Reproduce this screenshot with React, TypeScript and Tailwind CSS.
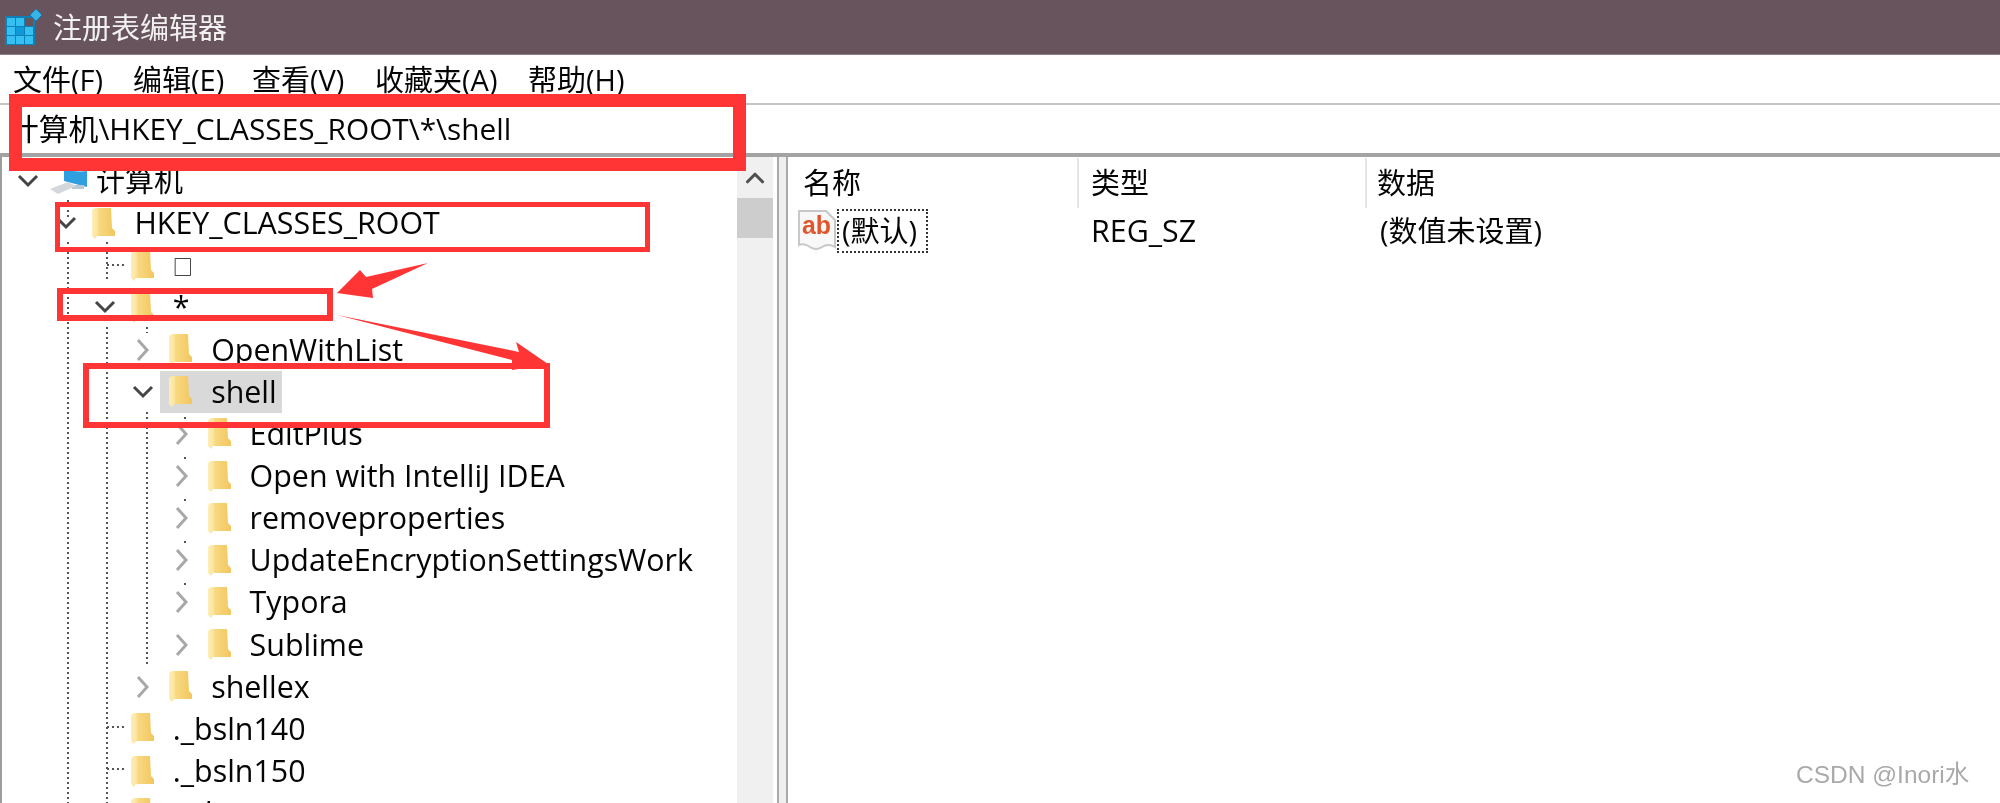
import { ChevronUp } from 'lucide-react';

const cjk = "font-['Open_Sans','Noto_Sans_CJK_SC',sans-serif]";

type Row = {
  label: string;
  level: number;
  state?: 'open' | 'closed';
  selected?: boolean;
};

const rows: Row[] = [
  { label: 'HKEY_CLASSES_ROOT', level: 1, state: 'open' },
  { label: '□', level: 2 },
  { label: '*', level: 2, state: 'open' },
  { label: 'OpenWithList', level: 3, state: 'closed' },
  { label: 'shell', level: 3, state: 'open', selected: true },
  { label: 'EditPlus', level: 4, state: 'closed' },
  { label: 'Open with IntelliJ IDEA', level: 4, state: 'closed' },
  { label: 'removeproperties', level: 4, state: 'closed' },
  { label: 'UpdateEncryptionSettingsWork', level: 4, state: 'closed' },
  { label: 'Typora', level: 4, state: 'closed' },
  { label: 'Sublime', level: 4, state: 'closed' },
  { label: 'shellex', level: 3, state: 'closed' },
  { label: '._bsln140', level: 2 },
  { label: '._bsln150', level: 2 },
  { label: '._dsn', level: 2 },
];

function Folder() {
  return (
    <svg width="23" height="31" viewBox="0 0 23 31" className="shrink-0">
      <defs>
        <linearGradient id="fold" x1="0" y1="0" x2="1" y2="0">
          <stop offset="0" stopColor="#fdeeb8" />
          <stop offset="0.22" stopColor="#fbe6a0" />
          <stop offset="0.3" stopColor="#f8d981" />
          <stop offset="1" stopColor="#f2c65f" />
        </linearGradient>
      </defs>
      <path d="M0 2 L3 0 L19 0 L20 20 L23 23 L23 28 L5 28 L3 31 L0 28 Z" fill="url(#fold)" />
    </svg>
  );
}

function Chevron({ state }: { state?: 'open' | 'closed' }) {
  if (state === 'open') {
    return (
      <svg width="24" height="16" viewBox="0 0 24 16">
        <path d="M3 3 L12 12 L21 3" fill="none" stroke="#454545" strokeWidth="3" />
      </svg>
    );
  }
  if (state === 'closed') {
    return (
      <svg width="16" height="26" viewBox="0 0 16 26">
        <path d="M3 3 L12 13 L3 23" fill="none" stroke="#a8a8a8" strokeWidth="3" />
      </svg>
    );
  }
  return null;
}

function TreeRow({ row }: { row: Row }) {
  const chevronCenter = 28 + row.level * 38.4;
  return (
    <div className="h-[42.15px] flex items-center relative" style={{ paddingLeft: chevronCenter - 14 }}>
      <span className="w-[28px] shrink-0 flex justify-center">
        <Chevron state={row.state} />
      </span>
      <span className="ml-[12px]">
        <Folder />
      </span>
      <span
        className={`ml-[19px] leading-[42px] text-[#050505] whitespace-nowrap ${
          row.label === '□' ? 'text-[20px] pt-[5px]' : 'text-[30.4px]'
        } ${cjk}`}
      >
        {row.label}
      </span>
      {row.selected && (
        <span className="absolute left-[160px] top-0 w-[122px] h-[42px] bg-[#d9d9d9] -z-10" />
      )}
    </div>
  );
}

function RegeditIcon() {
  return (
    <svg width="38" height="36" viewBox="0 0 38 36">
      <rect x="0" y="7" width="30" height="29" fill="#0f7fb8" />
      {[0, 1, 2].map((r) =>
        [0, 1, 2].map((c) => (
          <rect
            key={`${r}-${c}`}
            x={2 + c * 9}
            y={9 + r * 9}
            width="8"
            height="8"
            fill={r === 0 && c === 2 ? '#67545c' : r === 1 && c === 1 ? '#1098d8' : '#35c0f2'}
          />
        ))
      )}
      <path d="M31 0 L37 6 L31 12 L25 6 Z" fill="#35b4e8" stroke="#0f7fb8" />
    </svg>
  );
}

function ComputerIcon() {
  return (
    <svg width="38" height="28" viewBox="0 0 38 28" className="shrink-0">
      <path d="M14 1 L37 4 L37 20 L14 14 Z" fill="#2f9fe0" />
      <path d="M14 1 L37 4 L30 5 L14 3 Z" fill="#8fd3f7" />
      <rect x="22" y="18" width="12" height="4" fill="#b8c8d4" />
      <path d="M0 22 L18 15 L26 19 L8 27 Z" fill="#d4d8dc" />
    </svg>
  );
}

function AbIcon() {
  return (
    <svg width="38" height="44" viewBox="0 0 38 44" className="shrink-0">
      <path
        d="M1 2 L28 2 L37 11 L37 38 Q30 34 24 38 Q18 42 12 38 Q6 34 1 36 Z"
        fill="#f8f8f8"
        stroke="#c8c8c8"
        strokeWidth="2"
      />
      <text
        x="4"
        y="25"
        fontFamily="'Liberation Sans', sans-serif"
        fontWeight="700"
        fontSize="25"
        textLength="29"
        lengthAdjust="spacingAndGlyphs"
        fill="#e0552c"
      >
        ab
      </text>
    </svg>
  );
}

export default function App() {
  return (
    <div className={`h-screen w-full overflow-hidden flex flex-col bg-white relative blur-[0.6px] ${cjk}`}>
      {/* Title bar */}
      <div className="h-[55px] shrink-0 bg-[#67545c] border-b border-[#8d8186] flex items-center pl-[5px]">
        <RegeditIcon />
        <span className="ml-[10px] text-[29px] leading-none text-[#f2f0f0]">注册表编辑器</span>
      </div>

      {/* Menu */}
      <div className="h-[50px] shrink-0 flex items-center pl-[13px] pt-[1px] text-[29px] text-[#050505] border-b-2 border-[#c4c4c4]">
        <span className="w-[120px]">文件(F)</span>
        <span className="w-[119px]">编辑(E)</span>
        <span className="w-[123px]">查看(V)</span>
        <span className="w-[153px]">收藏夹(A)</span>
        <span>帮助(H)</span>
      </div>

      {/* Address bar */}
      <div className="h-[52px] shrink-0 flex items-center pl-[9px] pt-[1px] text-[29.8px] text-[#050505] border-b-4 border-[#a3a3a3] whitespace-nowrap">
        计算机\HKEY_CLASSES_ROOT\*\shell
      </div>

      <div className="flex-1 min-h-0 flex">
        {/* Tree */}
        <div className="w-[737px] shrink-0 border-l-2 border-[#9d9d9d] relative overflow-hidden z-0">
          <div className="pt-[3px] -ml-[2px]">
            <div className="h-[42.15px] flex items-center pl-[14px]">
              <span className="w-[28px] shrink-0 flex justify-center">
                <Chevron state="open" />
              </span>
              <span className="ml-[8px]">
                <ComputerIcon />
              </span>
              <span className="ml-[8px] text-[29px] text-[#050505]">计算机</span>
            </div>
            {rows.map((r) => (
              <TreeRow key={r.label} row={r} />
            ))}
          </div>
          {/* connector dots */}
          <svg className="absolute left-0 top-0 -z-10" width="300" height="650">
            <g stroke="#555" strokeWidth="2" strokeDasharray="2 3" fill="none">
              <path d="M66 43 V60 M66 85 V650" />
              <path d="M105 85 V125 M105 170 V650" />
              <path d="M105 108 H123 M105 570 H123 M105 612 H123" />
              <path d="M145 170 V176 M145 255 V508" />
              <path d="M183 260 V262 M183 300 V304 M183 342 V346 M183 384 V388 M183 426 V430" />
            </g>
          </svg>
        </div>

        {/* Scrollbar */}
        <div className="w-[36px] shrink-0 bg-[#f0f0f0] flex flex-col">
          <div className="h-[41px] flex items-center justify-center">
            <ChevronUp size={30} strokeWidth={2.5} color="#505050" />
          </div>
          <div className="h-[40px] bg-[#cdcdcd]" />
        </div>

        {/* Splitter */}
        <div className="w-[4px] shrink-0 bg-white" />
        <div className="w-[11px] shrink-0 bg-[#efefef] border-x-2 border-[#a9a9a9]" />

        {/* Values */}
        <div className="flex-1 min-w-0">
          <div className="grid grid-cols-[291px_288px_1fr] h-[51px] text-[29px] text-[#050505] pt-[1px]">
            <div className="pl-[15px] border-r-2 border-[#e5e5e5] flex items-center">名称</div>
            <div className="pl-[12px] border-r-2 border-[#e5e5e5] flex items-center">类型</div>
            <div className="pl-[10px] flex items-center">数据</div>
          </div>
          <div className="grid grid-cols-[291px_288px_1fr] h-[46px] text-[29px] text-[#050505]">
            <div className="flex items-center pl-[10px]">
              <AbIcon />
              <span className="ml-[1px] px-[3px] h-[44px] w-[91px] flex items-center border-2 border-dotted border-[#333] whitespace-nowrap">
                (默认)
              </span>
            </div>
            <div className="pl-[12px] flex items-center text-[30.4px]">REG_SZ</div>
            <div className="pl-[13px] flex items-center whitespace-nowrap">(数值未设置)</div>
          </div>
        </div>
      </div>

      {/* Red annotations */}
      <div className="absolute left-[9px] top-[94px] w-[737px] h-[77px] border-[13px] border-[#ff3535]" />
      <div className="absolute left-[55px] top-[202px] w-[595px] h-[50px] border-[5px] border-[#ff3535]" />
      <div className="absolute left-[57px] top-[288px] w-[276px] h-[33px] border-[6px] border-[#ff3535]" />
      <div className="absolute left-[83px] top-[363px] w-[467px] h-[65px] border-[6px] border-[#ff3535]" />
      <svg className="absolute left-0 top-0" width="600" height="400">
        <path d="M337 293 L360 270 L366 277 L428 263 L372 289 L373 298 Z" fill="#ff3535" />
        <path d="M337 315 L519 352 L516 342 L548 364 L512 370 L512 360 Z" fill="#ff3535" />
      </svg>

      {/* Watermark */}
      <span className="absolute left-[1796px] top-[761px] text-[24.5px] leading-[28px] text-[#a9a9a9] font-['Liberation_Sans','Noto_Sans_CJK_SC',sans-serif]">
        CSDN @Inori水
      </span>
    </div>
  );
}
